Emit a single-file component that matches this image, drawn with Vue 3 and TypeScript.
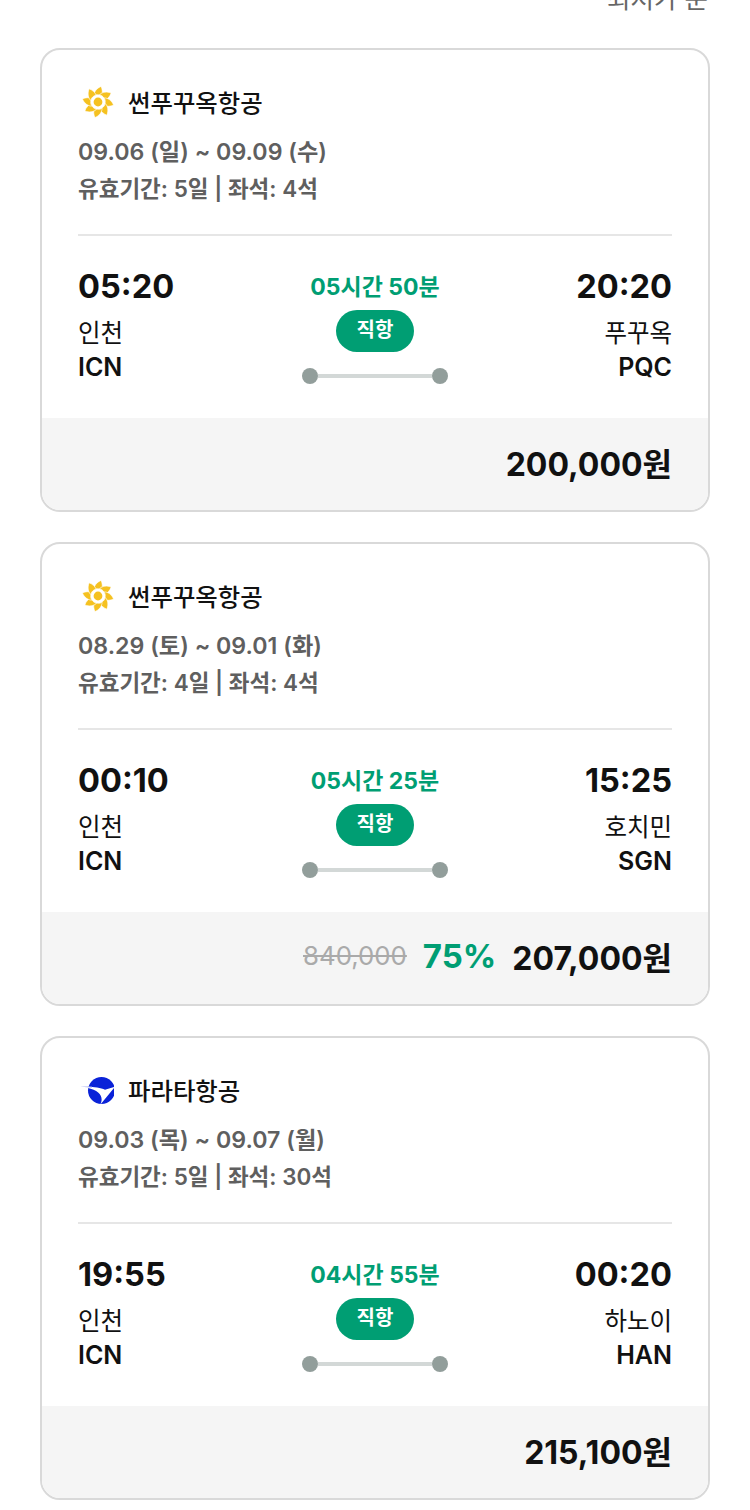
<script setup lang="ts">
interface Flight {
  airline: string
  logo: 'sun' | 'parata'
  dates: string
  info: string
  depart: string
  arrive: string
  duration: string
  toCity: string
  toCode: string
  price: string
  original?: string
  discount?: string
}

const flights: Flight[] = [
  {
    airline: '썬푸꾸옥항공',
    logo: 'sun',
    dates: '09.06 (일) ~ 09.09 (수)',
    info: '유효기간: 5일 | 좌석: 4석',
    depart: '05:20',
    arrive: '20:20',
    duration: '05시간 50분',
    toCity: '푸꾸옥',
    toCode: 'PQC',
    price: '200,000원'
  },
  {
    airline: '썬푸꾸옥항공',
    logo: 'sun',
    dates: '08.29 (토) ~ 09.01 (화)',
    info: '유효기간: 4일 | 좌석: 4석',
    depart: '00:10',
    arrive: '15:25',
    duration: '05시간 25분',
    toCity: '호치민',
    toCode: 'SGN',
    price: '207,000원',
    original: '840,000',
    discount: '75%'
  },
  {
    airline: '파라타항공',
    logo: 'parata',
    dates: '09.03 (목) ~ 09.07 (월)',
    info: '유효기간: 5일 | 좌석: 30석',
    depart: '19:55',
    arrive: '00:20',
    duration: '04시간 55분',
    toCity: '하노이',
    toCode: 'HAN',
    price: '215,100원'
  }
]

const petals = [0, 45, 90, 135, 180, 225, 270, 315]
</script>

<template>
  <div class="page">
    <div class="sort">최저가 순</div>
    <div class="list">
      <div v-for="(f, i) in flights" :key="i" class="card">
        <div class="body">
          <div class="airline">
            <svg v-if="f.logo === 'sun'" class="logo" viewBox="0 0 34 32">
              <g transform="translate(2 0)">
                <circle cx="16" cy="16" r="4.4" fill="#f5c120" />
                <path
                  v-for="a in petals"
                  :key="a"
                  :transform="`rotate(${a} 16 16)`"
                  d="M11.8 9.6 C12.2 5.6 14.6 2.4 19 0.4 C20.4 3.6 20.8 6.4 19.6 9.8 C17.4 8.4 14.4 8.4 11.8 9.6 Z"
                  fill="#f5c120"
                  stroke="#fff"
                  stroke-width="0.6"
                />
              </g>
            </svg>
            <svg v-else class="logo" viewBox="0 0 34 32">
              <circle cx="21.5" cy="16.5" r="13.5" fill="#0a22d8" />
              <path d="M7 12.8 C14 13 21 13.6 25 15.8 L35 12.8 L20 31 C24 24 21 16.8 7 13.8 Z" fill="#fff" />
              <path d="M0 12.8 L12 12.4 L12 13.4 Z" fill="#8a94ea" />
            </svg>
            <span class="name">{{ f.airline }}</span>
          </div>
          <div class="dates">{{ f.dates }}</div>
          <div class="info">{{ f.info }}</div>
          <div class="route">
            <div class="side">
              <div class="time">{{ f.depart }}</div>
              <div class="city">인천</div>
              <div class="code">ICN</div>
            </div>
            <div class="middle">
              <div class="duration">{{ f.duration }}</div>
              <div class="badge">직항</div>
              <div class="track"><i class="dot" /><i class="line" /><i class="dot" /></div>
            </div>
            <div class="side right">
              <div class="time">{{ f.arrive }}</div>
              <div class="city">{{ f.toCity }}</div>
              <div class="code">{{ f.toCode }}</div>
            </div>
          </div>
        </div>
        <div class="footer">
          <span v-if="f.original" class="original">{{ f.original }}</span>
          <span v-if="f.discount" class="discount">{{ f.discount }}</span>
          <span class="price">{{ f.price }}</span>
        </div>
      </div>
    </div>
  </div>
</template>

<style scoped>
.page {
  width: 750px;
  height: 1510px;
  overflow: hidden;
  background: #fff;
  font-family: Inter, "Noto Sans CJK KR", sans-serif;
  color: #111;
}

.sort {
  height: 49px;
  margin-top: -14px;
  padding-right: 42px;
  text-align: right;
  font-size: 25.5px;
  line-height: 26px;
  color: #666;
}

.list {
  display: flex;
  flex-direction: column;
  gap: 30px;
  padding: 13px 40px 0;
}

.card {
  border: 2px solid #d9d9d9;
  border-radius: 20px;
  overflow: hidden;
  background: #fff;
}

.body {
  padding: 30px 36px 34px;
}

.airline {
  display: flex;
  align-items: center;
  gap: 14px;
  height: 44px;
}

.logo {
  width: 34px;
  height: 32px;
  margin-left: 2px;
}

.name {
  margin-top: -2px;
  font-size: 24.4px;
  font-weight: 500;
}

.dates {
  margin-top: 12px;
  font-size: 23.2px;
  line-height: 32px;
  font-weight: 600;
  color: #5f5f5f;
}

.info {
  margin-top: 6px;
  padding-bottom: 30px;
  border-bottom: 2px solid #e6e6e6;
  font-size: 22.5px;
  line-height: 30px;
  font-weight: 600;
  color: #5f5f5f;
}

.route {
  display: flex;
  justify-content: space-between;
  margin-top: 30px;
}

.side {
  width: 150px;
}

.side.right {
  text-align: right;
}

.time {
  font-size: 32.6px;
  line-height: 40px;
  font-weight: 700;
}

.city {
  margin-top: 10px;
  font-size: 24.5px;
  line-height: 34px;
}

.code {
  font-size: 25px;
  line-height: 34px;
  font-weight: 600;
}

.middle {
  display: flex;
  flex-direction: column;
  align-items: center;
  padding-top: 4px;
}

.duration {
  font-size: 23px;
  line-height: 34px;
  font-weight: 700;
  color: #009e73;
}

.badge {
  margin-top: 6px;
  width: 78px;
  height: 42px;
  border-radius: 21px;
  background: #009e73;
  color: #fff;
  text-align: center;
  font-size: 20px;
  line-height: 40px;
  font-weight: 600;
}

.track {
  display: flex;
  align-items: center;
  margin-top: 16px;
}

.dot {
  width: 16px;
  height: 16px;
  border-radius: 50%;
  background: #929e9b;
}

.line {
  width: 114px;
  height: 4px;
  background: #d3d8d7;
}

.footer {
  display: flex;
  align-items: center;
  justify-content: flex-end;
  height: 92px;
  padding: 0 36px 5px;
  box-sizing: border-box;
  background: #f5f5f5;
}

.original {
  margin-right: 16px;
  font-size: 25.8px;
  color: #aaa;
  text-decoration: line-through;
}

.discount {
  margin-right: 16px;
  font-size: 33px;
  font-weight: 700;
  color: #009e73;
}

.price {
  font-size: 32px;
  font-weight: 700;
}
</style>
